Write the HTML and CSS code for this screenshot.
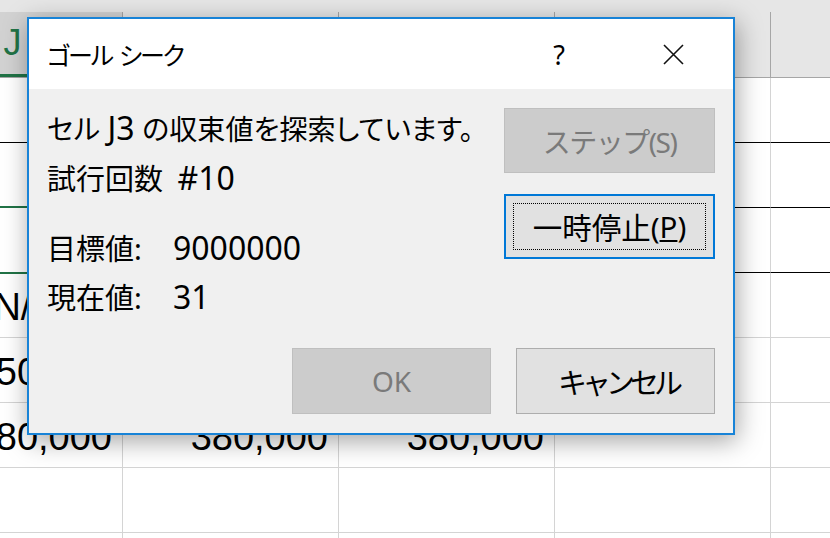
FILE: index.html
```html
<!DOCTYPE html>
<html lang="ja">
<head>
<meta charset="utf-8">
<title>ゴール シーク</title>
<link rel="stylesheet" href="styles.css">
</head>
<body>
<div class="sheet">
  <div class="topstrip"></div>
  <div class="heads">
    <div class="head sel">J</div>
    <div class="head"></div>
    <div class="head"></div>
    <div class="head"></div>
    <div class="head"></div>
  </div>
  <div class="grid">
    <div class="cell bk"></div><div class="cell bk"></div><div class="cell bk"></div><div class="cell bk"></div><div class="cell bk"></div>
    <div class="cell bk"></div><div class="cell bk"></div><div class="cell bk"></div><div class="cell bk"></div><div class="cell bk"></div>
    <div class="cell bk selcell"></div><div class="cell bk"></div><div class="cell bk"></div><div class="cell bk"></div><div class="cell bk"></div>
    <div class="cell center">#N/A</div><div class="cell"></div><div class="cell"></div><div class="cell"></div><div class="cell"></div>
    <div class="cell">350,000</div><div class="cell"></div><div class="cell"></div><div class="cell"></div><div class="cell"></div>
    <div class="cell">380,000</div><div class="cell">380,000</div><div class="cell">380,000</div><div class="cell"></div><div class="cell"></div>
    <div class="cell"></div><div class="cell"></div><div class="cell"></div><div class="cell"></div><div class="cell"></div>
    <div class="cell"></div><div class="cell"></div><div class="cell"></div><div class="cell"></div><div class="cell"></div>
  </div>
</div>

<div class="dialog">
  <div class="titlebar">
    <span class="title">ゴール シーク</span>
    <div class="tbtns">
      <span class="tbtn help">?</span>
      <span class="tbtn close"><svg width="21" height="21" viewBox="0 0 21 21"><path d="M1 1 L20 20 M20 1 L1 20" stroke="#111" stroke-width="1.6" fill="none"/></svg></span>
    </div>
  </div>
  <div class="content">
    <div class="top">
      <div class="info">
        <p class="line l1">セル <span class="num">J3</span> の収束値を探索しています。</p>
        <p class="line l2">試行回数 <span class="num gap">#10</span></p>
        <p class="line l3"><span class="lab">目標値:</span><span class="num">9000000</span></p>
        <p class="line l4"><span class="lab">現在値:</span><span class="num">31</span></p>
      </div>
      <div class="side">
        <button class="btn disabled step">ステップ(S)</button>
        <button class="btn focused"><span class="focusrect">一時停止(<u>P</u>)</span></button>
      </div>
    </div>
    <div class="bottom">
      <button class="btn disabled">OK</button>
      <button class="btn cancel">キャンセル</button>
    </div>
  </div>
</div>
</body>
</html>
```

FILE: styles.css
```css
html, body {
  margin: 0;
  padding: 0;
}
body {
  width: 830px;
  height: 538px;
  overflow: hidden;
  background: #ffffff;
  font-family: "Noto Sans", "Noto Sans CJK JP", sans-serif;
  position: relative;
}

/* ---------- spreadsheet behind ---------- */
.sheet {
  width: 830px;
  height: 538px;
  overflow: hidden;
}
.topstrip {
  height: 12px;
  background: #e6e6e6;
}
.heads {
  display: grid;
  grid-template-columns: repeat(5, 216px);
  margin-left: -93px;
  height: 65px;
  background: #e6e6e6;
  border-bottom: 1px solid #a6a6a6;
}
.head {
  border-right: 1px solid #a6a6a6;
  display: flex;
  align-items: center;
  justify-content: center;
  font-family: "Liberation Sans", sans-serif;
  font-size: 36px;
  color: #444;
}
.head.sel {
  background: #d2d2d2;
  color: #217346;
  border-bottom: 3px solid #217346;
  padding-right: 4px;
}
.grid {
  display: grid;
  grid-template-columns: repeat(5, 216px);
  grid-auto-rows: 65px;
  margin-left: -93px;
}
.cell {
  box-sizing: border-box;
  border-right: 1px solid #d4d4d4;
  border-bottom: 1px solid #d4d4d4;
  display: flex;
  align-items: flex-end;
  justify-content: flex-end;
  padding: 0 10px 11px 0;
  font-family: "Liberation Sans", sans-serif;
  font-size: 38px;
  line-height: 1;
  color: #000;
}
.cell.center {
  justify-content: center;
  padding-right: 0;
}
.cell.bk {
  border-bottom-color: #000;
}
.selcell {
  position: relative;
}
.selcell::after {
  content: "";
  position: absolute;
  left: -2px;
  right: -2px;
  top: -2px;
  bottom: -2px;
  border: 2px solid #217346;
}

/* ---------- dialog ---------- */
.dialog {
  position: absolute;
  left: 27px;
  top: 17px;
  width: 708px;
  height: 418px;
  box-sizing: border-box;
  border: 2px solid #1883d7;
  background: #f0f0f0;
  box-shadow: 2px 6px 24px rgba(0, 0, 0, 0.36);
  display: flex;
  flex-direction: column;
  font-feature-settings: "palt";
}
.titlebar {
  height: 70px;
  background: #ffffff;
  display: flex;
  align-items: center;
  padding-left: 18px;
}
.title {
  font-size: 25px;
  letter-spacing: -2.2px;
  word-spacing: 3px;
  color: #000;
}
.tbtns {
  margin-left: auto;
  display: flex;
  height: 100%;
}
.tbtn {
  width: 116px;
  height: 100%;
  display: flex;
  align-items: center;
  justify-content: center;
}
.help {
  font-size: 27px;
  color: #000;
}
.close {
  padding-right: 4px;
  box-sizing: border-box;
}
.content {
  flex: 1;
  display: flex;
  flex-direction: column;
  padding: 19px 18px 19px 18px;
}
.top {
  display: flex;
  justify-content: space-between;
}
.info {
  font-size: 29px;
  color: #000;
}
.line {
  margin: 0;
  height: 40px;
  line-height: 40px;
  white-space: nowrap;
}
.l1 {
  font-size: 28px;
  letter-spacing: 0.1px;
}
.l2 { margin-top: 10px; }
.l3 { margin-top: 30px; }
.l4 { margin-top: 9px; }
.num {
  font-size: 32px;
}
.num.gap {
  margin-left: 7px;
}
.lab {
  display: inline-block;
  width: 126px;
}
.side {
  display: flex;
  flex-direction: column;
  gap: 21px;
}
.btn {
  box-sizing: border-box;
  width: 211px;
  height: 65px;
  margin: 0;
  padding: 0;
  font-family: inherit;
  font-size: 28px;
  color: #000;
  background: #e1e1e1;
  border: 1px solid #adadad;
  display: flex;
  align-items: center;
  justify-content: center;
}
.btn.disabled {
  background: #cccccc;
  border-color: #bfbfbf;
  color: #7a7a7a;
}
.btn.step {
  letter-spacing: -1.5px;
}
.btn.cancel {
  font-size: 29px;
  letter-spacing: -5px;
  padding-left: 5px;
}
.btn.focused {
  border: 2px solid #0078d7;
  padding: 7px;
  font-size: 29.5px;
}
.focusrect {
  flex: 1;
  align-self: stretch;
  border: 1px dotted #000;
  display: flex;
  align-items: center;
  justify-content: center;
}
.bottom {
  margin-top: auto;
  display: flex;
  justify-content: flex-end;
  gap: 25px;
}
.bottom .btn {
  width: 199px;
  height: 66px;
}
```
